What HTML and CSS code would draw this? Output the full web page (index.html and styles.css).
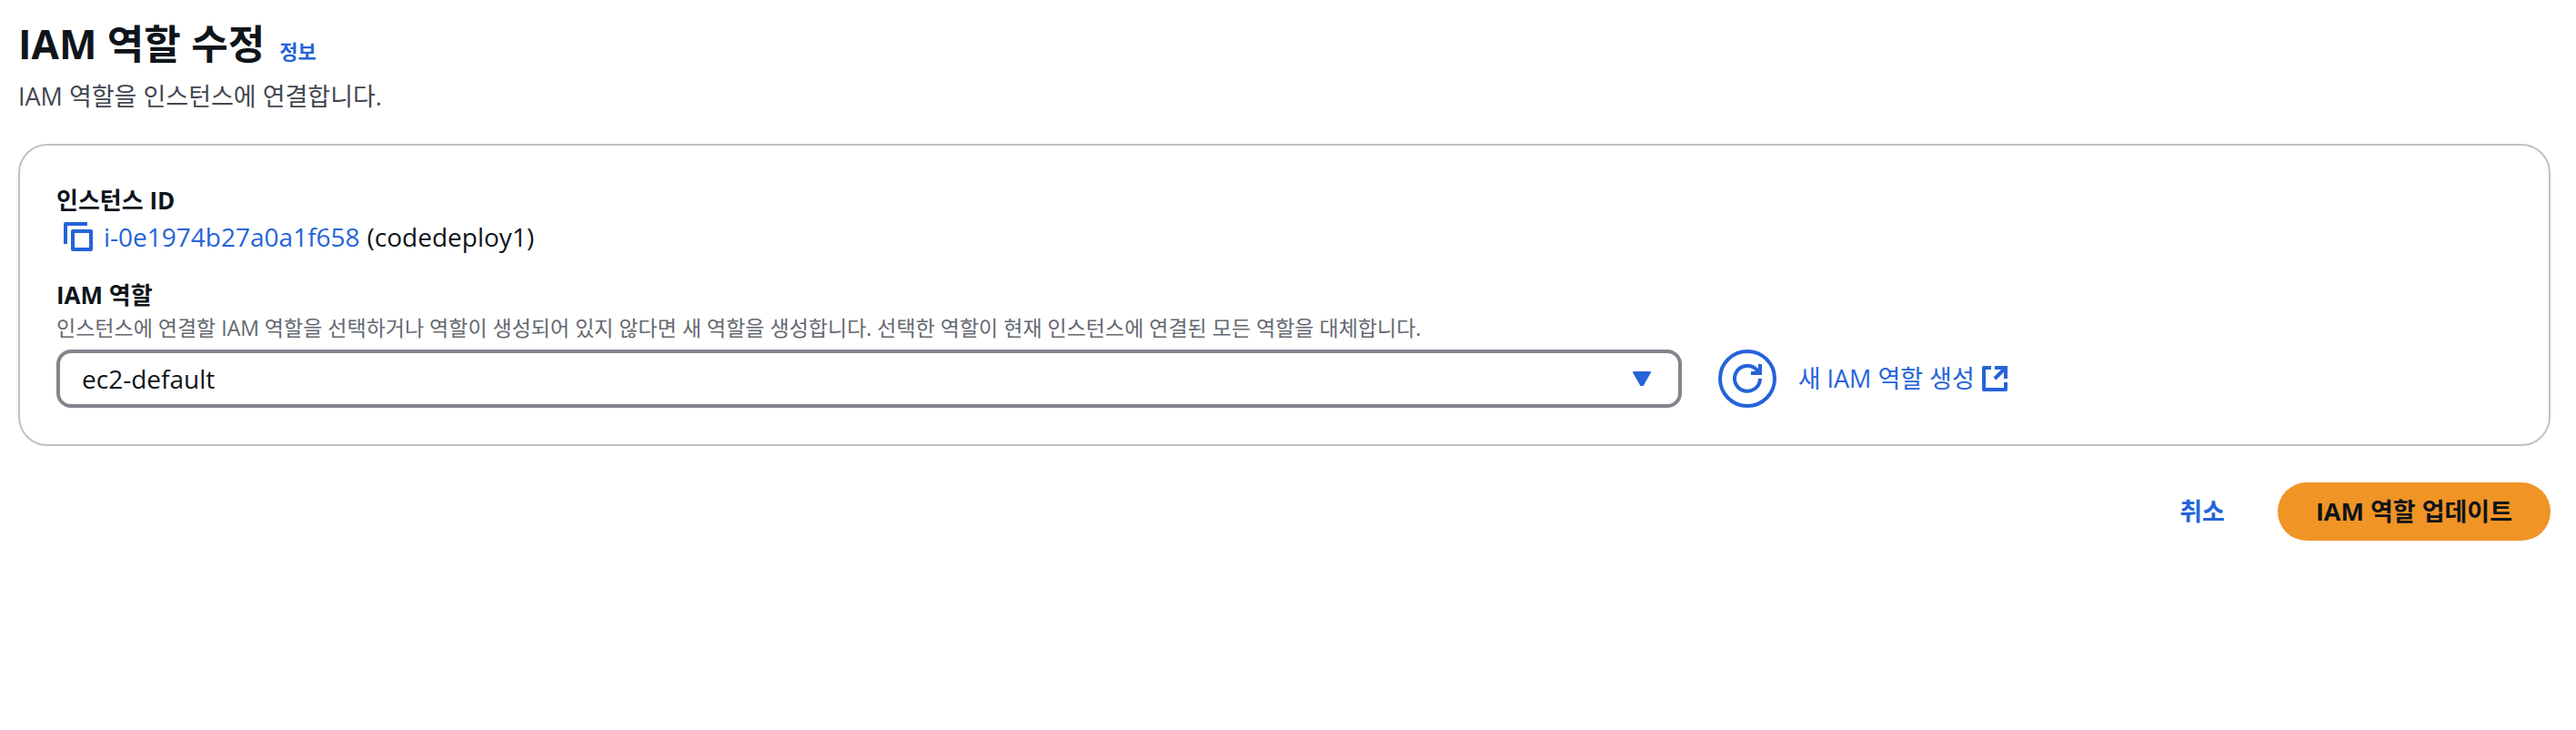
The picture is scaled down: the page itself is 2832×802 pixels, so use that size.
FILE: index.html
```
<!DOCTYPE html>
<html lang="ko">
<head>
    <meta charset="UTF-8">
    <meta name="viewport" content="width=device-width, initial-scale=1.0">
    <title>IAM 역할 수정</title>
    <link rel="stylesheet" href="styles.css">
</head>
<body>
    <main class="page">
        <header class="header">
            <div class="title-row">
                <h1 class="title">IAM 역할 수정</h1>
                <a href="#info" class="info-link">정보</a>
            </div>
            <p class="description">IAM 역할을 인스턴스에 연결합니다.</p>
        </header>

        <form class="form">
            <section class="card">
                <div class="field">
                    <h2 class="label">인스턴스 ID</h2>
                    <div class="instance">
                        <button type="button" class="copy-button" aria-label="복사">
                            <svg class="icon" viewBox="0 0 32 32" fill="none" stroke="currentColor" stroke-width="4" stroke-linejoin="round">
                                <path d="M2 24V2h24" />
                                <path d="M10 10h20v20H10z" />
                            </svg>
                        </button>
                        <a href="#instance" class="link">i-0e1974b27a0a1f658</a>
                        <span>(codedeploy1)</span>
                    </div>
                </div>

                <div class="field">
                    <label class="label" for="iam-role">IAM 역할</label>
                    <p class="hint" id="role-hint">인스턴스에 연결할 IAM 역할을 선택하거나 역할이 생성되어 있지 않다면 새 역할을 생성합니다. 선택한 역할이 현재 인스턴스에 연결된 모든 역할을 대체합니다.</p>
                    <div class="role-row">
                        <div class="select-wrap">
                            <select class="select" id="iam-role" aria-describedby="role-hint">
                                <option>ec2-default</option>
                            </select>
                            <svg class="caret" viewBox="0 0 20 16" fill="currentColor" stroke="currentColor" stroke-width="2" stroke-linejoin="round">
                                <path d="M1 1h18l-8 14h-2z" />
                            </svg>
                        </div>
                        <div class="role-actions">
                            <button type="button" class="refresh-button" aria-label="새로 고침">
                                <svg class="icon" viewBox="0 0 32 32" fill="none" stroke="currentColor" stroke-width="4">
                                    <path d="M30 16a14 14 0 1 1-4-10l4 4" />
                                    <path d="M30 0v10H20" />
                                </svg>
                            </button>
                            <a href="#create-role" class="link create-link">
                                새 IAM 역할 생성
                                <svg class="icon-external" viewBox="0 0 28 28" fill="none" stroke="currentColor" stroke-width="4">
                                    <path d="M10 2H2v24h24v-8" stroke-linejoin="round" />
                                    <path d="M14 2h12v12M26 2L14 14" />
                                </svg>
                            </a>
                        </div>
                    </div>
                </div>
            </section>

            <div class="form-actions">
                <button type="button" class="button">취소</button>
                <button type="submit" class="button button-primary">IAM 역할 업데이트</button>
            </div>
        </form>
    </main>
</body>
</html>
```
FILE: styles.css
```
:root {
    --text: #0f141a;
    --text-secondary: #424650;
    --text-hint: #656871;
    --link: #2563d9;
    --primary: #f09426;
    --card-border: #c0c0c8;
    --input-border: #84848d;
}

* {
    margin: 0;
    padding: 0;
    box-sizing: border-box;
}

body {
    font-family: "Open Sans", "Noto Sans CJK KR", sans-serif;
    font-size: 28px;
    line-height: 40px;
    background: #fff;
    color: var(--text);
}

.page {
    padding: 18px 28px 20px 20px;
}

.header {
    margin-bottom: 32px;
}

.title-row {
    display: flex;
    align-items: baseline;
    gap: 16px;
}

.title {
    font-size: 44px;
    font-weight: 700;
    line-height: 60px;
}

.info-link {
    font-size: 22px;
    font-weight: 600;
    color: var(--link);
    text-decoration: none;
}

.description {
    margin-top: 8px;
    font-size: 27px;
    color: var(--text-secondary);
}

.card {
    display: flex;
    flex-direction: column;
    gap: 24px;
    padding: 40px;
    border: 2px solid var(--card-border);
    border-radius: 32px;
}

.label {
    display: block;
    font-size: 26px;
    font-weight: 700;
    line-height: 40px;
}

.instance {
    display: flex;
    align-items: center;
    gap: 8px;
}

.link {
    color: var(--link);
    text-decoration: none;
}

.icon {
    display: block;
    width: 32px;
    height: 32px;
}

.copy-button {
    padding: 0 4px 0 8px;
    border: none;
    background: none;
    color: var(--link);
    cursor: pointer;
}

.hint {
    font-size: 23px;
    line-height: 32px;
    color: var(--text-hint);
}

.role-row {
    display: grid;
    grid-template-columns: repeat(12, 1fr);
    column-gap: 40px;
    margin-top: 8px;
}

.select-wrap {
    position: relative;
    grid-column: span 8;
}

.select {
    display: block;
    width: 100%;
    height: 64px;
    padding: 0 64px 0 24px;
    border: 4px solid var(--input-border);
    border-radius: 16px;
    background: transparent;
    color: var(--text);
    font: inherit;
    appearance: none;
    cursor: pointer;
}

.caret {
    position: absolute;
    top: 24px;
    right: 34px;
    width: 20px;
    height: 16px;
    color: var(--link);
    pointer-events: none;
}

.role-actions {
    display: flex;
    grid-column: span 4;
    align-items: center;
    gap: 24px;
}

.refresh-button {
    display: flex;
    align-items: center;
    justify-content: center;
    width: 64px;
    height: 64px;
    border: 4px solid var(--link);
    border-radius: 50%;
    background: none;
    color: var(--link);
    cursor: pointer;
}

.create-link {
    display: flex;
    align-items: center;
    gap: 8px;
    font-size: 27px;
}

.icon-external {
    width: 28px;
    height: 28px;
}

.form-actions {
    display: flex;
    justify-content: flex-end;
    gap: 16px;
    margin-top: 40px;
}

.button {
    padding: 12px 42px;
    border: none;
    border-radius: 32px;
    background: none;
    color: var(--link);
    font-family: inherit;
    font-size: 27px;
    font-weight: 700;
    line-height: 40px;
    cursor: pointer;
}

.button-primary {
    background: var(--primary);
    color: var(--text);
}
```
